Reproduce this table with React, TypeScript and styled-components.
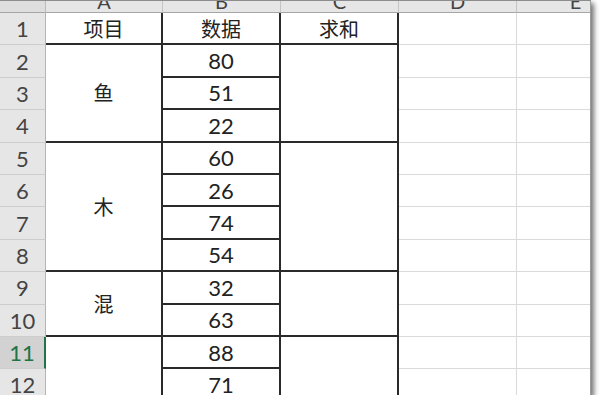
import React from "react";
import styled, { createGlobalStyle } from "styled-components";

const Global = createGlobalStyle`
  html, body { margin: 0; padding: 0; background: #fff; }
  #root { padding: 0; }
`;

const Frame = styled.div`
  width: 591px;
  height: 395px;
  overflow: hidden;
  box-sizing: border-box;
  border-top: 1px solid #8c8c8c;
  border-right: 1px solid #9a9a9a;
  background: #fff;
  box-shadow: 3px 3px 5px rgba(0, 0, 0, 0.55);
`;

const Sheet = styled.div`
  display: grid;
  grid-template-columns: 46px 117px 118px 118px 118px 118px;
  grid-template-rows: 12px repeat(13, 32.4px);
  width: max-content;
`;

const Corner = styled.div`
  grid-column: 1;
  grid-row: 1;
  background: #dedede;
  box-sizing: border-box;
  border-right: 1px solid #bcbcbc;
  border-bottom: 1px solid #a6a6a6;
`;

const ColHead = styled.div<{ $col: number }>`
  grid-column: ${(p) => p.$col};
  grid-row: 1;
  background: #e6e6e6;
  box-sizing: border-box;
  border-right: 1px solid #c4c4c4;
  border-bottom: 1px solid #a6a6a6;
  overflow: hidden;
  text-align: center;
`;

const Letter = styled.span`
  display: block;
  margin-top: -10px;
  font: 20px/20px Lato, "Liberation Sans", sans-serif;
  color: #444;
`;

const RowHead = styled.div<{ $row: number; $selected?: boolean }>`
  grid-column: 1;
  grid-row: ${(p) => p.$row};
  box-sizing: border-box;
  display: flex;
  align-items: center;
  justify-content: center;
  background: ${(p) => (p.$selected ? "#d2d2d2" : "#e6e6e6")};
  color: ${(p) => (p.$selected ? "#217346" : "#444")};
  border-bottom: 1px solid #cdcdcd;
  border-right: ${(p) => (p.$selected ? "2px solid #217346" : "1px solid #b4b4b4")};
  font: 22px Lato, "Liberation Sans", sans-serif;
`;

const Cell = styled.div<{
  $col: number;
  $row: number;
  $span?: number;
  $table?: boolean;
  $cjk?: boolean;
}>`
  grid-column: ${(p) => p.$col};
  grid-row: ${(p) => p.$row} / span ${(p) => p.$span ?? 1};
  box-sizing: border-box;
  display: flex;
  align-items: center;
  justify-content: center;
  background: #fff;
  color: #222;
  border-right: ${(p) => (p.$table ? "2px solid #2a2a2a" : "1px solid #dadada")};
  border-bottom: ${(p) => (p.$table ? "2px solid #2a2a2a" : "1px solid #dadada")};
  font-family: Lato, "Noto Sans CJK SC", sans-serif;
  font-size: ${(p) => (p.$cjk ? "20px" : "22px")};
`;

const groups: { label: string; start: number; span: number }[] = [
  { label: "鱼", start: 2, span: 3 },
  { label: "木", start: 5, span: 4 },
  { label: "混", start: 9, span: 2 },
  { label: "", start: 11, span: 3 },
];

const values = ["80", "51", "22", "60", "26", "74", "54", "32", "63", "88", "71", ""];

export default function App() {
  const rows = Array.from({ length: 13 }, (_, i) => i + 1);
  return (
    <>
      <Global />
      <Frame>
        <Sheet>
          <Corner />
          {["A", "B", "C", "D", "E"].map((l, i) => (
            <ColHead key={l} $col={i + 2}>
              <Letter>{l}</Letter>
            </ColHead>
          ))}
          {rows.map((r) => (
            <RowHead key={r} $row={r + 1} $selected={r === 11}>
              {r}
            </RowHead>
          ))}
          <Cell $col={2} $row={2} $table $cjk>项目</Cell>
          <Cell $col={3} $row={2} $table $cjk>数据</Cell>
          <Cell $col={4} $row={2} $table $cjk>求和</Cell>
          {groups.map((g) => (
            <React.Fragment key={g.start}>
              <Cell $col={2} $row={g.start + 1} $span={g.span} $table $cjk>
                {g.label}
              </Cell>
              <Cell $col={4} $row={g.start + 1} $span={g.span} $table />
            </React.Fragment>
          ))}
          {values.map((v, i) => (
            <Cell key={i} $col={3} $row={i + 3} $table>
              {v}
            </Cell>
          ))}
          {rows.map((r) => (
            <React.Fragment key={"g" + r}>
              <Cell $col={5} $row={r + 1} />
              <Cell $col={6} $row={r + 1} />
            </React.Fragment>
          ))}
        </Sheet>
      </Frame>
    </>
  );
}
